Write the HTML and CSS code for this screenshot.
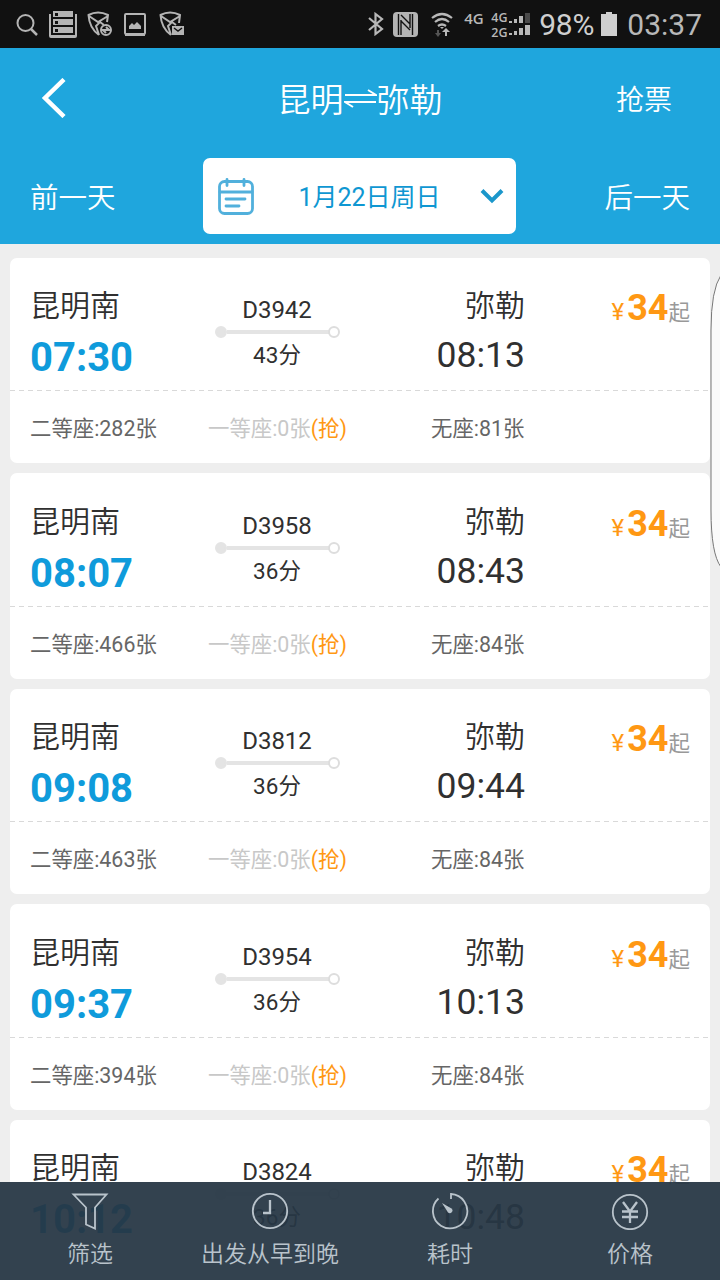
FILE: index.html
```html
<!DOCTYPE html>
<html lang="zh-CN">

<head>
    <meta charset="UTF-8">
    <title>昆明⇌弥勒</title>
    <link rel="stylesheet" href="styles.css">
</head>

<body>
    <!-- 状态栏 -->
    <div class="status-bar">
        <div class="status-left">
            <svg width="22" height="24" viewBox="0 0 22 24" fill="none" stroke="#b4b4b4" stroke-width="2"><circle cx="9.500" cy="11" r="8"/><path d="M15 17l6 6" stroke-width="2.500"/></svg>
            <svg width="28" height="28" viewBox="0 0 28 28"><path fill="#b4b4b4" d="M4 1h20v6H4zM4 9h20v6H4zM4 17h20v6H4zM0 4h2v21h24V4h2v22q0 2-2 2H2q-2 0-2-2z"/><path fill="#111" d="M6 3h3v3H6zM6 11h3v3H6zM6 19h3v3H6z"/></svg>
            <svg width="26" height="26" viewBox="0 0 26 26" fill="none" stroke="#b4b4b4" stroke-width="2"><path d="M12 24C5 19 2 12 1.500 4Q11-1 21 4L20 11M2 5l9 6 10-6M12 24l-3-9 4-4 4 3"/><circle cx="19" cy="19" r="5"/><path d="M15 19h8M19 16l3 3M19 22l-3-3"/></svg>
            <svg width="22" height="23" viewBox="0 0 22 23"><path d="M2 1h18q1 0 1 1v18q0 1-1 1H2q-1 0-1-1V2q0-1 1-1z" fill="none" stroke="#b4b4b4" stroke-width="2"/><path fill="#b4b4b4" d="M1 20h20v3H1zM5 16v-3l3-3 2 2 3-3 4 4v3z"/></svg>
            <svg class="shield-mail" width="26" height="26" viewBox="0 0 26 26" fill="none" stroke="#b4b4b4" stroke-width="2"><path d="M12 24C5 19 2 12 1.500 4Q11-1 21 4L20 12M2 5l9 6 10-6M12 24l-3-9 4-4 4 3"/><path fill="#b4b4b4" stroke="none" d="M13 15h12v9H13z"/><path stroke="#111" stroke-width="1.500" d="M15 17l4 3 4-3"/></svg>
        </div>
        <div class="status-right">
            <svg class="bluetooth" width="16" height="24" viewBox="0 0 16 24" fill="none" stroke="#b8b8b8" stroke-width="2.200"><path d="M1 6l13 11-6.500 5V2L14 7 1 18"/></svg>
            <svg class="nfc" width="25" height="25" viewBox="0 0 25 25"><path fill="#b4b4b4" d="M4 0h17q4 0 4 4v17q0 4-4 4H4q-4 0-4-4V4q0-4 4-4z"/><path d="M5.500 23V2M19.500 2v21M8 8v15M17 2v14M8 3l9 9M8 9l9 9" fill="none" stroke="#111" stroke-width="1.400"/></svg>
            <svg class="wifi" width="22" height="25" viewBox="0 0 22 25"><path d="M1 6q10-8 20 0M4 10q7-6 14 0M7 14q4-3 8 0" fill="none" stroke="#b8b8b8" stroke-width="2.200"/><path fill="#b8b8b8" d="M9 15h4l-2 2zM14 24v-4h-3l4-4 4 4h-3v4z"/><path fill="#555" d="M6 18h2v3h2l-3 4-3-4h2z"/></svg>
            <span class="net">4G</span>
            <div class="net-stack">
                <span>4G</span>
                <span>2G</span>
            </div>
            <svg class="signal" width="22" height="24" viewBox="0 0 22 24" fill="#b8b8b8"><path d="M0 9h3v2H0zM5 7h3v4H5zM10 4h4v7h-4zM0 21h3v2H0zM5 19h3v4H5zM10 16h4v7h-4zM16 13h5v10h-5z"/><path fill="#4a4a4a" d="M16 1h5v10h-5z"/></svg>
            <span class="battery-text">98%</span>
            <svg class="battery" width="16" height="24" viewBox="0 0 16 24"><path fill="#cfcfcf" d="M5 0h6v2h5v22H0V2h5z"/></svg>
            <span class="clock">03:37</span>
        </div>
    </div>

    <!-- 标题和日期 -->
    <div class="header">
        <div class="title-row">
            <svg class="back" width="26" height="40" viewBox="0 0 26 40" fill="none" stroke="#fff" stroke-width="4.500"><path d="M23 1.500L4 20l19 18.500"/></svg>
            <h1><span>昆明</span><svg width="33" height="20" viewBox="0 0 33 20" fill="none" stroke="#fff" stroke-width="2"><path d="M1 7h31l-8-5M32 14H1l8 5"/></svg><span>弥勒</span></h1>
            <span class="grab-link">抢票</span>
        </div>
        <div class="date-row">
            <span>前一天</span>
            <div class="date-box">
                <svg width="36" height="37" viewBox="0 0 36 37" fill="none" stroke="#51b0dc" stroke-width="2.800" stroke-linecap="round"><rect x="1.500" y="3.500" width="33" height="32" rx="5"/><path d="M2 14h32M9 1.500v6M26 1.500v6M8 21h19M8 28h13"/></svg>
                <span class="date">1月22日周日</span>
                <svg width="24" height="16" viewBox="0 0 24 16" fill="none" stroke="#1b97cb" stroke-width="4"><path d="M2 2.500l10 10 10-10"/></svg>
            </div>
            <span>后一天</span>
        </div>
    </div>

    <!-- 车次列表 -->
    <div class="train-list">
        <div class="train">
            <div class="train-main">
                <div class="from"><p class="station">昆明南</p><p class="time">07:30</p></div>
                <div class="trip"><p class="number">D3942</p><div class="line"></div><p class="duration">43分</p></div>
                <div class="to"><p class="station">弥勒</p><p class="time">08:13</p></div>
                <p class="price"><span class="yen">¥</span><b>34</b><span class="qi">起</span></p>
            </div>
            <div class="seats">
                <span>二等座:282张</span>
                <span class="sold-out">一等座:0张<em>(抢)</em></span>
                <span>无座:81张</span>
            </div>
        </div>
        <div class="train">
            <div class="train-main">
                <div class="from"><p class="station">昆明南</p><p class="time">08:07</p></div>
                <div class="trip"><p class="number">D3958</p><div class="line"></div><p class="duration">36分</p></div>
                <div class="to"><p class="station">弥勒</p><p class="time">08:43</p></div>
                <p class="price"><span class="yen">¥</span><b>34</b><span class="qi">起</span></p>
            </div>
            <div class="seats">
                <span>二等座:466张</span>
                <span class="sold-out">一等座:0张<em>(抢)</em></span>
                <span>无座:84张</span>
            </div>
        </div>
        <div class="train">
            <div class="train-main">
                <div class="from"><p class="station">昆明南</p><p class="time">09:08</p></div>
                <div class="trip"><p class="number">D3812</p><div class="line"></div><p class="duration">36分</p></div>
                <div class="to"><p class="station">弥勒</p><p class="time">09:44</p></div>
                <p class="price"><span class="yen">¥</span><b>34</b><span class="qi">起</span></p>
            </div>
            <div class="seats">
                <span>二等座:463张</span>
                <span class="sold-out">一等座:0张<em>(抢)</em></span>
                <span>无座:84张</span>
            </div>
        </div>
        <div class="train">
            <div class="train-main">
                <div class="from"><p class="station">昆明南</p><p class="time">09:37</p></div>
                <div class="trip"><p class="number">D3954</p><div class="line"></div><p class="duration">36分</p></div>
                <div class="to"><p class="station">弥勒</p><p class="time">10:13</p></div>
                <p class="price"><span class="yen">¥</span><b>34</b><span class="qi">起</span></p>
            </div>
            <div class="seats">
                <span>二等座:394张</span>
                <span class="sold-out">一等座:0张<em>(抢)</em></span>
                <span>无座:84张</span>
            </div>
        </div>
        <div class="train">
            <div class="train-main">
                <div class="from"><p class="station">昆明南</p><p class="time">10:12</p></div>
                <div class="trip"><p class="number">D3824</p><div class="line"></div><p class="duration">36分</p></div>
                <div class="to"><p class="station">弥勒</p><p class="time">10:48</p></div>
                <p class="price"><span class="yen">¥</span><b>34</b><span class="qi">起</span></p>
            </div>
        </div>
    </div>

    <!-- 侧屏把手 -->
    <div class="edge-handle">
        <svg width="10" height="300" viewBox="0 0 10 300"><path d="M11 5Q1 20 1 60V240Q1 284 11 297" fill="#fafafa" stroke="#777" stroke-width="1"/></svg>
    </div>

    <!-- 底部筛选栏 -->
    <div class="tab-bar">
        <div class="tab">
            <svg width="38" height="38" viewBox="0 0 38 38" fill="none" stroke="#b9c3cb" stroke-width="1.800"><path d="M2.500 2.500h33L24 15.500v21l-9-4v-17z"/></svg>
            <span>筛选</span>
        </div>
        <div class="tab">
            <svg width="38" height="38" viewBox="0 0 38 38" fill="none" stroke="#b9c3cb" stroke-width="1.800"><circle cx="19" cy="19" r="17.200"/><path d="M19 8v13h-7" stroke-width="2.300"/></svg>
            <span>出发从早到晚</span>
        </div>
        <div class="tab">
            <svg width="38" height="38" viewBox="0 0 38 38" fill="none" stroke="#b9c3cb" stroke-width="1.800"><path d="M20 7V2A17.200 17.200 0 1 1 7.500 6.500"/><path fill="#b9c3cb" stroke="none" d="M11 11l9.500 5.500a2.500 2.500 0 0 1-3.500 4z"/></svg>
            <span>耗时</span>
        </div>
        <div class="tab">
            <svg width="38" height="38" viewBox="0 0 38 38" fill="none" stroke="#b9c3cb" stroke-width="1.800"><circle cx="19" cy="20" r="17.200"/><path d="M12 10l7 9.500 7-9.500M19 19v12M11 19.500h16M11 25h16" stroke-width="2.300"/></svg>
            <span>价格</span>
        </div>
    </div>
</body>

</html>
```
FILE: styles.css
```css
* {
    box-sizing: border-box;
}

body {
    margin: 0;
    height: 1280px;
    overflow: hidden;
    position: relative;
    background-color: #eeeeee;
    font-family: Roboto, "Noto Sans CJK SC", sans-serif;
    color: #303030;
}

p,
h1 {
    margin: 0;
    font-weight: normal;
}

svg {
    display: block;
    flex: none;
}

/* 状态栏 */
.status-bar {
    display: flex;
    justify-content: space-between;
    height: 48px;
    padding: 0 18px 0 16px;
    background-color: #111111;
    color: #b8b8b8;
}

.status-left,
.status-right {
    display: flex;
    align-items: center;
}

.status-left {
    gap: 10.5px;
}

.shield-mail {
    margin-left: 3px;
}

.bluetooth {
    margin-right: 9px;
}

.nfc {
    margin-right: 13px;
}

.wifi {
    margin-right: 11px;
}

.net {
    width: 27px;
    margin-bottom: 12px;
    font: 600 15px/16px "Open Sans", sans-serif;
}

.net-stack {
    display: flex;
    flex-direction: column;
    width: 18px;
    padding-top: 1px;
    font: 600 12.5px/15px "Open Sans", sans-serif;
}

.signal {
    margin-right: 8px;
}

.battery-text {
    width: 62px;
    font-size: 30px;
    letter-spacing: -0.3px;
    padding-top: 1px;
    color: #cfcfcf;
}

.clock {
    margin-left: 10px;
    padding-top: 1px;
    font-size: 30px;
}

/* 标题和日期 */
.header {
    height: 196px;
    background-color: #1fa6dd;
    color: #ffffff;
}

.title-row {
    display: grid;
    grid-template-columns: 200px 1fr 200px;
    align-items: center;
    height: 100px;
}

.back {
    margin-left: 41px;
}

h1 {
    display: flex;
    align-items: center;
    justify-content: center;
    font-size: 33px;
    font-weight: 350;
    line-height: 48px;
}

h1 span {
    padding-top: 5px;
}

.grab-link {
    padding-right: 48px;
    text-align: right;
    font-size: 28px;
    font-weight: 350;
}

.date-row {
    display: flex;
    align-items: center;
    justify-content: space-between;
    height: 96px;
    padding: 0 30px;
    font-size: 28.5px;
    font-weight: 350;
    line-height: 40px;
}

.date-row > span {
    padding-top: 6px;
}

.date-box {
    display: flex;
    align-items: center;
    width: 313px;
    height: 76px;
    margin-right: 1px;
    padding: 0 12px 0 15px;
    background-color: #ffffff;
    border-radius: 7px;
}

.date {
    flex: 1;
    padding: 4px 0 0 5px;
    text-align: center;
    color: #0f97d2;
    font-size: 25px;
    font-weight: normal;
}

/* 车次列表 */
.train-list {
    display: flex;
    flex-direction: column;
    gap: 10.1px;
    padding: 13.9px 10px 0;
}

.train {
    flex: none;
    height: 205.4px;
    background-color: #ffffff;
    border-radius: 7px;
}

.train-main {
    display: grid;
    grid-template-columns: 185px 125px 185px 165px;
    height: 132.3px;
    padding: 26.2px 20px 0;
}

.station {
    font-size: 30px;
    font-weight: 350;
    line-height: 44px;
}

.time {
    font-size: 35.5px;
    line-height: 54px;
}

.from .time {
    color: #0f9bdb;
    font-size: 40px;
    font-weight: bold;
    line-height: 60px;
}

.trip {
    padding-top: 10px;
    text-align: center;
}

.number {
    padding-right: 1px;
    font-size: 24px;
    line-height: 32px;
}

.line {
    display: flex;
    align-items: center;
    justify-content: space-between;
    height: 12px;
    background: linear-gradient(#e4e4e4, #e4e4e4) center / 102px 4px no-repeat;
}

.line::before,
.line::after {
    content: "";
    box-sizing: border-box;
    width: 12px;
    height: 12px;
    border: 2px solid #dddddd;
    border-radius: 50%;
    background-color: #ffffff;
}

.line::before {
    border-color: #e4e4e4;
    background-color: #e4e4e4;
}

.duration {
    padding-right: 1px;
    font-size: 22.5px;
    line-height: 34px;
}

.to {
    text-align: right;
}

.price {
    text-align: right;
    line-height: 48px;
    color: #ff9813;
    font-size: 36px;
}

.yen {
    margin-right: 3px;
    font-size: 24px;
}

.qi {
    color: #999999;
    font-size: 21.5px;
}

.seats {
    display: grid;
    grid-template-columns: 178px 223px 1fr;
    padding: 0 20px;
    /* 虚线分隔 */
    background: repeating-linear-gradient(90deg, #d9d9d9 0 5px, transparent 5px 9px) top / 100% 1px no-repeat;
    color: #666666;
    font-size: 21.4px;
    line-height: 77px;
}

.sold-out {
    color: #c8c8c8;
}

.sold-out em {
    color: #ff9813;
    font-style: normal;
}

/* 侧屏把手 */
.edge-handle {
    position: absolute;
    top: 270px;
    right: 0;
}

/* 底部筛选栏 */
.tab-bar {
    position: absolute;
    left: 0;
    right: 0;
    bottom: 0;
    display: grid;
    grid-template-columns: repeat(4, 1fr);
    height: 98px;
    background-color: rgba(38, 54, 68, 0.94);
}

.tab {
    display: flex;
    flex-direction: column;
    align-items: center;
    padding-top: 10px;
    color: #b9c3cb;
    font-size: 23px;
    font-weight: 350;
    line-height: 49px;
}
```
